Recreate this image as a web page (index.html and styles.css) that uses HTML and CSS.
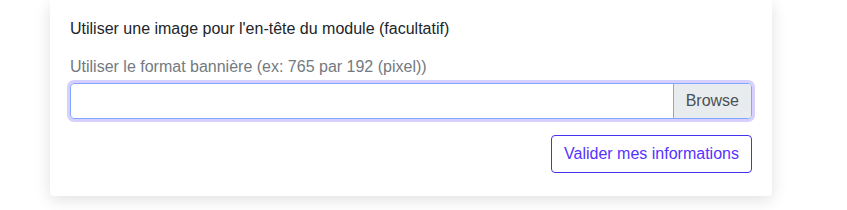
FILE: index.html
```html
<!DOCTYPE html>
<html lang="fr">
<head>
    <meta charset="UTF-8">
    <title>Module - en-tête</title>
    <link rel="stylesheet" href="styles.css">
</head>
<body>
    <div class="module-card">
        <div class="form-group">
            <p class="field-title">Utiliser une image pour l'en-tête du module (facultatif)</p>
            <label class="field-hint" for="banner">Utiliser le format bannière (ex: 765 par 192 (pixel))</label>
            <div class="custom-file">
                <input type="file" id="banner" class="custom-file-input">
                <span class="custom-file-label"></span>
                <span class="custom-file-browse">Browse</span>
            </div>
        </div>
        <div class="form-actions">
            <button type="button" class="btn-outline">Valider mes informations</button>
        </div>
    </div>
</body>
</html>
```

FILE: styles.css
```css
* {
    margin: 0;
    padding: 0;
    box-sizing: border-box;
}

html,
body {
    min-height: 210px;
}

body {
    font-family: 'Liberation Sans', Arial, Helvetica, sans-serif;
    font-size: 16px;
    line-height: 24px;
    color: #212529;
    background: #fff;
    padding-bottom: 14px;
}

.module-card {
    width: 722px;
    margin-left: 50px;
    padding: 17px 20px 23px;
    background: #fff;
    border-radius: 0 0 4px 4px;
    box-shadow: 0 4px 16px rgba(0, 0, 0, 0.12);
}

.field-title {
    margin-bottom: 14px;
}

.field-hint {
    display: block;
    color: #737a80;
    margin-bottom: 4px;
}

.custom-file {
    position: relative;
    display: flex;
    height: 36px;
    border: 1px solid #80a6ff;
    border-radius: 4px;
    box-shadow: 0 0 0 3px rgba(120, 100, 255, 0.3);
    overflow: hidden;
}

.custom-file-input {
    position: absolute;
    opacity: 0;
    width: 100%;
    height: 100%;
}

.custom-file-label {
    flex: 1;
}

.custom-file-browse {
    display: flex;
    align-items: center;
    padding: 0 12px;
    background: #e9ecef;
    border-left: 1px solid #80a6ff;
    color: #495057;
}

.form-actions {
    display: flex;
    justify-content: flex-end;
    margin-top: 16px;
}

.btn-outline {
    font-family: inherit;
    font-size: 16px;
    width: 201px;
    height: 38px;
    color: #5533ff;
    background: #fff;
    border: 1px solid #4433ee;
    border-radius: 4px;
    cursor: pointer;
}
```
